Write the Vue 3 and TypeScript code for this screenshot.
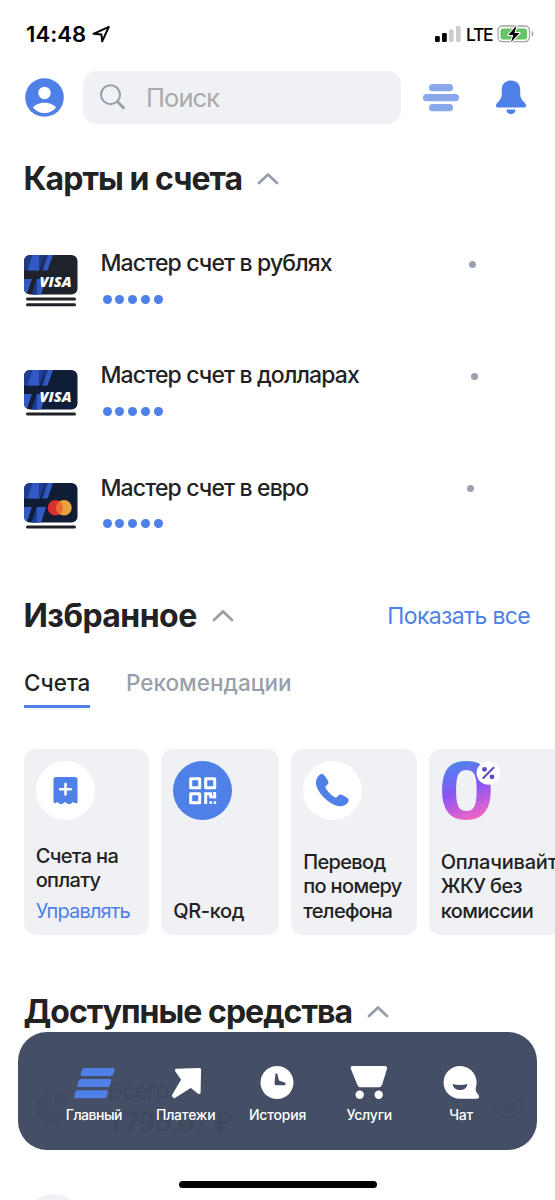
<script setup lang="ts">
interface Account {
  title: string
  system: 'visa' | 'mastercard'
  base: string
  shade: string
  stacked: number
  mark: string
}

const accounts: Account[] = [
  { title: 'Мастер счет в рублях', system: 'visa', base: '#1e222b', shade: '#1f3b7f', stacked: 2, mark: 'mark-rub' },
  { title: 'Мастер счет в долларах', system: 'visa', base: '#0f1d36', shade: '#1d3c93', stacked: 1, mark: 'mark-usd' },
  { title: 'Мастер счет в евро', system: 'mastercard', base: '#0f1d36', shade: '#1d3c93', stacked: 1, mark: 'mark-eur' },
]
</script>

<template>
  <div class="screen">
    <header class="status">
      <span class="time">14:48</span>
      <svg class="loc" width="20" height="20" viewBox="0 0 20 20">
        <path d="M1.500 9.800 16.800 2.800 10.200 17.400 9.400 10.400Z" fill="none" stroke="#000" stroke-width="2" stroke-linejoin="round" />
      </svg>
      <svg class="signal" width="26" height="18" viewBox="0 0 26 18">
        <rect x="0" y="11" width="4.8" height="6" rx="1.3" />
        <rect x="7" y="8" width="4.8" height="9" rx="1.3" />
        <rect x="14" y="4.600" width="4.600" height="12.400" rx="1.3" fill="#ccc" />
        <rect x="21" y="1" width="4.600" height="16" rx="1.3" fill="#ccc" />
      </svg>
      <span class="lte">LTE</span>
      <svg class="battery" width="38" height="20" viewBox="0 0 38 20">
        <rect x="1" y="2" width="31.500" height="15.600" rx="4.500" fill="none" stroke="#a3a3a3" stroke-width="1.300" />
        <rect x="3.500" y="4.400" width="26.500" height="11" rx="2.500" fill="#65c466" />
        <path d="M34.800 7v5.600q1.600-.7 1.600-2.800T34.800 7Z" fill="#999" />
        <path d="M19.500 1.500 11.300 11h5l-2.300 7.300L22.500 9h-5Z" stroke="#fff" stroke-width="2.200" stroke-linejoin="round" />
        <path d="M19.500 1.500 11.300 11h5l-2.300 7.300L22.500 9h-5Z" />
      </svg>
    </header>

    <div class="toolbar">
      <svg class="avatar" width="39" height="39" viewBox="0 0 39 39">
        <circle cx="19.500" cy="19.500" r="19.300" fill="#4e80e8" />
        <circle cx="19.500" cy="15" r="6.200" fill="#fff" />
        <path d="M8 29.500C10 26.500 15 24.700 19.500 24.700S29 26.500 31 29.500C28.500 33 24 35 19.500 35S10.500 33 8 29.500Z" fill="#fff" />
      </svg>
      <div class="search">
        <svg width="28" height="28" viewBox="0 0 28 28" fill="none" stroke="#979fab" stroke-linecap="round">
          <circle cx="10.500" cy="10.700" r="9.500" stroke-width="2" />
          <path d="m17.500 17.800 6 6" stroke-width="2.900" />
        </svg>
        <span>Поиск</span>
      </div>
      <svg class="lines" width="36" height="28" viewBox="0 0 36 28" fill="#88a8ea">
        <rect x="6" y="0" width="24" height="7.300" rx="3.600" />
        <rect x="0" y="10" width="36" height="7.300" rx="3.600" />
        <rect x="6" y="20" width="24" height="7.300" rx="3.600" />
      </svg>
      <svg class="bell" width="30" height="35" viewBox="0 0 30 35" fill="#4e80e8">
        <path d="M15 .5C9.500.5 5.800 4.300 5.800 9.500v4.500c0 3.500-1.200 5.500-3.500 7.700C1 23 0 24 0 25.400c0 1.400.8 2.100 2.200 2.100h25.600c1.400 0 2.200-.7 2.200-2.100 0-1.400-1-2.400-2.300-3.700-2.300-2.200-3.500-4.200-3.500-7.700V9.500C24.200 4.300 20.500.5 15 .5Z" />
        <path d="M10.500 29.500h9c0 2.800-1.900 4.700-4.500 4.700s-4.500-1.900-4.500-4.700Z" />
      </svg>
    </div>

    <div class="heading h-cards">
      <h2>Карты и счета</h2>
      <svg class="chev" width="22" height="13" viewBox="0 0 22 13"><path d="M2 11 11 2.500 20 11" /></svg>
    </div>

    <ul class="accounts">
      <li v-for="a in accounts" :key="a.title">
        <svg class="card" width="54" height="54" viewBox="0 0 54 54">
          <defs>
            <clipPath :id="a.mark"><rect width="53.500" height="39.500" rx="6" /></clipPath>
          </defs>
          <g :clip-path="`url(#${a.mark})`">
            <rect width="54" height="40" :fill="a.base" />
            <path d="M0 0H21L16 15.500H0Z" :fill="a.shade" />
            <path d="M8.500 0H15V15.500H3.500Z" fill="#3259c4" />
            <path d="M24 0H29L23.500 15.500H18.500Z" fill="#3259c4" />
            <path d="M21.500 0H24L18.500 15.500H17.500Z" :fill="a.shade" />
            <path d="M0 24H8L2.500 40H0Z" fill="#3259c4" />
            <path d="M13 24H22L17 40H8Z" fill="#3259c4" />
            <path d="M10.500 30 13 24V40H7.500Z" :fill="a.shade" />
          </g>
          <text v-if="a.system === 'visa'" class="visa" x="15.500" y="32" textLength="32" lengthAdjust="spacingAndGlyphs">VISA</text>
          <g v-else>
            <circle cx="31.500" cy="24.800" r="7.700" fill="#d9302d" />
            <circle cx="40" cy="24.800" r="7.700" fill="#eba33f" />
            <path d="M35.750 18.400a7.700 7.700 0 0 1 0 12.800 7.700 7.700 0 0 1 0-12.800Z" fill="#ec6a34" />
          </g>
          <rect x="2" y="42.500" width="50" height="3" rx="1.500" fill="#202226" />
          <rect v-if="a.stacked > 1" x="2" y="48.300" width="50" height="3" rx="1.500" fill="#202226" />
        </svg>
        <div class="info">
          <span class="title">{{ a.title }}</span>
          <span class="dots"><i v-for="n in 5" :key="n" /></span>
        </div>
        <i class="pin" :class="a.mark" />
      </li>
    </ul>

    <div class="heading h-fav">
      <h2>Избранное</h2>
      <svg class="chev" width="22" height="13" viewBox="0 0 22 13"><path d="M2 11 11 2.500 20 11" /></svg>
      <a>Показать все</a>
    </div>

    <nav class="tabs">
      <span class="tab on">Счета</span>
      <span class="tab rec">Рекомендации</span>
    </nav>

    <div class="tiles">
      <div class="tile wide">
        <svg width="59" height="59" viewBox="0 0 59 59">
          <circle cx="29.500" cy="29.500" r="29.500" fill="#fff" />
          <path d="M20 16h19q2.500 0 2.500 2.500V42l-2.200.4q-2-2.400-4.200 0-2.200 1.500-4 0-1.800-2.400-4 0-2 1.300-4 0-2-2.200-4 0L17.500 41V18.500Q17.500 16 20 16Z" fill="#4e80e8" />
          <path d="M29.500 23v10.500M24.200 28.200h10.600" stroke="#fff" stroke-width="2.600" stroke-linecap="round" />
        </svg>
        <p>Счета на<br />оплату</p>
        <a>Управлять</a>
      </div>
      <div class="tile slim">
        <svg width="59" height="59" viewBox="0 0 59 59">
          <circle cx="29.500" cy="29.500" r="29.500" fill="#4e80e8" />
          <g fill="none" stroke="#fff" stroke-width="3">
            <rect x="17.700" y="17.700" width="9" height="9" stroke-linejoin="round" />
            <rect x="32.700" y="17.700" width="9" height="9" stroke-linejoin="round" />
            <rect x="17.700" y="32.700" width="9" height="9" stroke-linejoin="round" />
            <path d="M32.700 43V32.700h5v3.200h5.500M41.700 37.500V31" stroke-width="2.900" />
          </g>
          <path d="M36.500 40.200h2.500v2.800h-2.500zM40.700 40.200h2.500v2.800h-2.500z" fill="#fff" />
        </svg>
        <p class="qr">QR-код</p>
      </div>
      <div class="tile wide">
        <svg width="59" height="59" viewBox="0 0 59 59">
          <circle cx="29.500" cy="29.500" r="29.500" fill="#fff" />
          <path transform="translate(.8 0)" d="M15.300 14.300c2.200-2 4.300-1.500 5.900.9l2.700 4.100c1.300 2.200.9 3.600-1 5-1.400 1-1.500 1.900-.6 3.400 2.200 3.600 5 6.300 8.400 8.300 1.500.9 2.400.7 3.400-.7 1.300-2 2.700-2.300 4.900-1.100l3.800 2.300c2.700 1.700 2.900 3.400.7 5.700-3.700 3.900-9.200 4-15.600.2-6.100-3.600-11.300-8.900-14.300-15-2.400-5-1.800-9.500 1.700-13.100Z" fill="#4e80e8" />
        </svg>
        <p>Перевод<br />по номеру<br />телефона</p>
      </div>
      <div class="tile promo">
        <svg width="59" height="59" viewBox="0 0 59 59">
          <defs>
            <linearGradient id="zero-fill" gradientUnits="userSpaceOnUse" x1="12" y1="0" x2="32" y2="59">
              <stop offset="0" stop-color="#4a86ea" />
              <stop offset=".5" stop-color="#8a55f5" />
              <stop offset="1" stop-color="#f365c5" />
            </linearGradient>
          </defs>
          <text class="zero" x="-3" y="58.200" textLength="57" lengthAdjust="spacingAndGlyphs" fill="url(#zero-fill)">0</text>
          <circle cx="47.300" cy="12" r="11.700" fill="#fff" />
          <g fill="#5f45c8">
            <circle cx="43.500" cy="8.300" r="2.400" />
            <circle cx="51" cy="15.800" r="2.400" />
            <path d="m42.300 17 10.200-10.200" stroke="#5f45c8" stroke-width="2" stroke-linecap="round" />
          </g>
        </svg>
        <p><span class="wider">Оплачивайте</span><br />ЖКУ без<br />комиссии</p>
      </div>
    </div>

    <div class="heading h-funds">
      <h2>Доступные средства</h2>
      <svg class="chev" width="22" height="13" viewBox="0 0 22 13"><path d="M2 11 11 2.500 20 11" /></svg>
    </div>

    <div class="total">
      <svg class="pie" width="59" height="59" viewBox="0 0 59 59">
        <circle cx="29.500" cy="29.500" r="29.500" fill="#eff1f5" />
        <path d="M27 13a16.500 16.500 0 1 0 18 18H27Z" fill="#222" />
        <path d="M31 12a16 16 0 0 1 15 15H31Z" fill="#222" />
      </svg>
      <div class="sum">
        <span>Всего</span>
        <b>1 796,07 ₽</b>
      </div>
      <svg class="eye" width="36" height="24" viewBox="0 0 36 24">
        <path d="M2 12Q9 2 18 2t16 10q-7 10-16 10T2 12Z" fill="none" stroke="#222" stroke-width="2.500" />
        <circle cx="18" cy="12" r="5.500" />
      </svg>
    </div>
    <div class="next" />

    <nav class="dock">
      <div class="item main">
        <svg width="42" height="36" viewBox="-1 0 42 36" fill="#4e80e8">
          <path d="M11 2h28q2 0 1.500 2l-1 4q-.6 2-2.600 2H8.200q-2 0-1.500-2l1-4Q8.500 2 11 2Z" />
          <path d="M7.700 13h28q2 0 1.500 2l-1 4q-.6 2-2.600 2H4.900q-2 0-1.500-2l1-4q.8-2 3.300-2Z" />
          <path d="M4.400 24.200h28q2 0 1.500 2l-1 4q-.6 2-2.600 2H1.600q-2 0-1.500-2l1-4q.8-2 3.300-2Z" />
        </svg>
        <span>Главный</span>
      </div>
      <div class="item">
        <svg width="36" height="36" viewBox="0 0 36 36">
          <path d="M8.500 4.300 31.500 3.500 31 26.500 23 20 6.500 30.500 5.500 29.500 15 13.500Z" fill="#fff" stroke="#fff" stroke-width="3.200" stroke-linejoin="round" />
        </svg>
        <span>Платежи</span>
      </div>
      <div class="item">
        <svg width="36" height="36" viewBox="0 0 36 36">
          <circle cx="18" cy="16.500" r="16.500" fill="#fff" />
          <path d="M16.500 7.500h1.800l1.600 7 6.500 2.200v2.500h-9.200q-1.800 0-1.700-2Z" fill="#444f65" />
        </svg>
        <span>История</span>
      </div>
      <div class="item">
        <svg width="40" height="36" viewBox="-.7 0 40 36" fill="#fff">
          <path d="M3 0h32q3 0 2.200 3L32.500 18.500q-.9 2.700-3.500 2.700H11q-2.600 0-3.500-2.700L1.200 3Q.2 0 3 0Z" />
          <circle cx="10" cy="28.700" r="4.200" />
          <circle cx="29" cy="28.700" r="4.200" />
        </svg>
        <span>Услуги</span>
      </div>
      <div class="item">
        <svg width="36" height="36" viewBox="0 0 36 36">
          <path d="M17 0a16.500 16.500 0 0 1 15.800 21.500q-.8 3.300 2 6.500 2.200 2.600.8 4.100-.6.700-2 .7H17A16.400 16.400 0 0 1 17 0Z" fill="#fff" />
          <path d="M9.500 18q7.500 2 15 0-1.200 6-7.500 6t-7.500-6Z" fill="#444f65" />
        </svg>
        <span>Чат</span>
      </div>
    </nav>
    <div class="home" />
  </div>
</template>

<style>
body {
  background: #fff;
}
</style>

<style scoped>
.screen {
  position: relative;
  width: 555px;
  height: 1200px;
  overflow: hidden;
  background: #fff;
  color: #222;
  font-family: Inter, 'Liberation Sans', sans-serif;
}
svg {
  display: block;
  flex: none;
}
.status {
  display: flex;
  align-items: center;
  height: 68px;
  padding-left: 26px;
  color: #000;
}
.time {
  width: 62px;
  font-size: 22px;
  font-weight: 600;
  letter-spacing: 0.1px;
  white-space: nowrap;
}
.loc {
  margin-left: 4px;
}
.signal {
  margin-left: 323px;
}
.lte {
  width: 27px;
  margin-left: 5px;
  font-size: 17.500px;
  font-weight: 500;
  letter-spacing: -1.300px;
}
.battery {
  margin-left: 4px;
}
.toolbar {
  display: flex;
  align-items: center;
  height: 53px;
  margin-top: 3px;
  padding-left: 25px;
}
.search {
  display: flex;
  align-items: center;
  width: 318px;
  height: 53px;
  margin-left: 19px;
  padding-left: 17px;
  box-sizing: border-box;
  border-radius: 14px;
  background: #f0f1f5;
}
.search span {
  margin-left: 18px;
  color: #aaa;
  font-size: 25.500px;
  letter-spacing: -0.9px;
}
.lines {
  margin-left: 22px;
}
.bell {
  margin-left: 36.500px;
}
.heading {
  display: flex;
  align-items: center;
  height: 40px;
  padding-left: 23.500px;
}
h2 {
  margin: 0;
  padding-top: 1px;
  font-size: 32px;
  font-weight: 700;
  line-height: 40px;
  white-space: nowrap;
}
.chev {
  margin-left: 15px;
  fill: none;
  stroke: #979fab;
  stroke-width: 2.8;
  stroke-linecap: round;
  stroke-linejoin: round;
}
.h-cards {
  margin-top: 34px;
}
.h-cards h2 {
  letter-spacing: -0.96px;
}
.h-fav h2 {
  letter-spacing: -0.55px;
}
.h-funds h2 {
  letter-spacing: -0.98px;
}
.accounts {
  margin: 48px 0 0;
  padding: 0;
  list-style: none;
}
.accounts li {
  display: flex;
  align-items: flex-start;
  height: 112.3px;
  padding-left: 23.500px;
}
.card {
  margin-top: 9px;
}
li:nth-child(2) .card {
  margin-top: 12px;
}
li:nth-child(3) .card {
  margin-top: 12px;
}
.visa {
  fill: #fff;
  font: italic 800 14.500px 'Open Sans', sans-serif;
}
.info {
  display: flex;
  flex-direction: column;
  width: 360px;
  margin-left: 23px;
}
.title {
  height: 34px;
  font-size: 23px;
  font-weight: 500;
  letter-spacing: -0.87px;
  line-height: 34px;
  white-space: nowrap;
}
.dots {
  display: flex;
  gap: 3.800px;
  margin: 14.500px 0 0 2px;
}
.dots i {
  width: 9px;
  height: 9px;
  border-radius: 50%;
  background: #4e80e8;
}
.pin {
  width: 7px;
  height: 7px;
  margin: 14.500px 0 0 8px;
  border-radius: 50%;
  background: #9aa0ae;
}
.mark-usd {
  margin-left: 10px;
}
.mark-eur {
  margin-left: 6px;
}
.h-fav {
  margin-top: 13px;
  padding-right: 25px;
}
.h-fav a {
  margin-left: auto;
  color: #4e80e8;
  font-size: 23px;
  letter-spacing: -0.65px;
}
.tabs {
  display: flex;
  gap: 36px;
  height: 42px;
  margin-top: 30px;
  padding-left: 24px;
}
.tab {
  box-sizing: border-box;
  height: 42px;
  font-size: 22.500px;
  font-weight: 500;
  line-height: 34px;
  white-space: nowrap;
}
.on {
  width: 66px;
  border-bottom: 3px solid #4e80e8;
}
.rec {
  color: #989faa;
}
.tiles {
  display: flex;
  gap: 12px;
  margin-top: 41.500px;
  padding-left: 23.700px;
}
.tile {
  display: flex;
  flex: none;
  flex-direction: column;
  box-sizing: border-box;
  height: 186px;
  padding: 12px 0 11.500px 12px;
  border-radius: 12px;
  background: #f0f1f5;
}
.wide {
  width: 125.500px;
}
.slim {
  width: 118px;
}
.promo {
  width: 150px;
}
.tile p {
  margin: auto 0 0;
  font-size: 20px;
  font-weight: 500;
  letter-spacing: -0.65px;
  line-height: 24.700px;
  white-space: nowrap;
}
.tile .qr {
  letter-spacing: -0.35px;
}
.wider {
  letter-spacing: -0.2px;
}
.tile a {
  margin-top: 6px;
  color: #4e80e8;
  font-size: 20px;
  letter-spacing: -0.85px;
  line-height: 24.700px;
}
.zero {
  font: 700 83px 'Liberation Sans', sans-serif;
}
.h-funds {
  margin-top: 56px;
}
.total {
  display: flex;
  align-items: center;
  height: 80px;
  margin-top: 36px;
  padding-left: 24px;
}
.pie,
.eye {
  opacity: 0.6;
}
.sum {
  display: flex;
  flex-direction: column;
  width: 383px;
  margin-left: 25px;
  font-size: 23px;
  letter-spacing: -0.9px;
  line-height: 32px;
}
.sum b {
  font-size: 27px;
  font-weight: 600;
  letter-spacing: -1px;
}
.next {
  width: 59px;
  height: 59px;
  margin: 47px 0 0 24px;
  border-radius: 50%;
  background: #eff1f5;
}
.dock {
  position: absolute;
  top: 1031.500px;
  left: 18px;
  display: flex;
  box-sizing: border-box;
  width: 519px;
  height: 118px;
  padding: 34px 30px 0;
  border-radius: 29px;
  background: rgba(63, 74, 97, 0.975);
}
.item {
  display: flex;
  flex: 1;
  flex-direction: column;
  align-items: center;
  color: #fff;
  font-size: 14px;
  font-weight: 500;
  letter-spacing: -0.2px;
  line-height: 20px;
}
.main {
  letter-spacing: -0.5px;
}
.item span {
  margin-top: 3px;
}
.home {
  position: absolute;
  top: 1180.500px;
  left: 179px;
  width: 198px;
  height: 7.500px;
  border-radius: 4px;
  background: #000;
}
</style>
